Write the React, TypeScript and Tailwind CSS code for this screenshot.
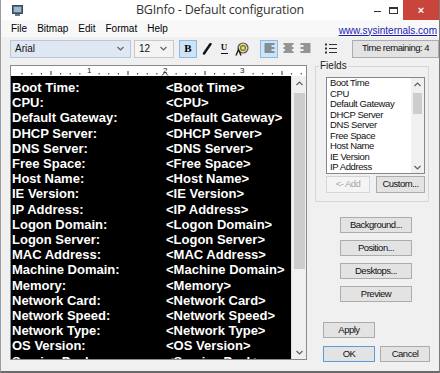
import React from "react";

const rows: [string, string][] = [
  ["Boot Time:", "<Boot Time>"],
  ["CPU:", "<CPU>"],
  ["Default Gateway:", "<Default Gateway>"],
  ["DHCP Server:", "<DHCP Server>"],
  ["DNS Server:", "<DNS Server>"],
  ["Free Space:", "<Free Space>"],
  ["Host Name:", "<Host Name>"],
  ["IE Version:", "<IE Version>"],
  ["IP Address:", "<IP Address>"],
  ["Logon Domain:", "<Logon Domain>"],
  ["Logon Server:", "<Logon Server>"],
  ["MAC Address:", "<MAC Address>"],
  ["Machine Domain:", "<Machine Domain>"],
  ["Memory:", "<Memory>"],
  ["Network Card:", "<Network Card>"],
  ["Network Speed:", "<Network Speed>"],
  ["Network Type:", "<Network Type>"],
  ["OS Version:", "<OS Version>"],
  ["Service Pack:", "<Service Pack>"],
];

const fields = [
  "Boot Time",
  "CPU",
  "Default Gateway",
  "DHCP Server",
  "DNS Server",
  "Free Space",
  "Host Name",
  "IE Version",
  "IP Address",
];

function Chevron({ up = false }: { up?: boolean }) {
  return (
    <svg width="7" height="5" viewBox="0 0 7 5">
      <path
        d={up ? "M0.5 4 L3.5 1 L6.5 4" : "M0.5 1 L3.5 4 L6.5 1"}
        fill="none"
        stroke="#606060"
        strokeWidth="1.2"
      />
    </svg>
  );
}

function Ruler() {
  const ticks: React.ReactNode[] = [];
  for (let i = 1; i < 31; i++) {
    const x = 1 + i * 9.625;
    if (i % 8 === 0) continue;
    const half = i % 4 === 0;
    ticks.push(
      <rect key={i} x={x} y={half ? 5 : 7} width="1" height={half ? 4 : 1.5} fill="#333" />
    );
  }
  return (
    <svg width="294" height="10" viewBox="0 0 294 10" className="block">
      {ticks}
      <text x="76" y="7" fontSize="8" fontFamily="Liberation Sans, Arial, sans-serif" fill="#222">1</text>
      <text x="152" y="7" fontSize="8" fontFamily="Liberation Sans, Arial, sans-serif" fill="#222">2</text>
      <path d="M151 9.5 L154 6 L157 9.5" fill="none" stroke="#333" strokeWidth="1" />
      <text x="229" y="7" fontSize="8" fontFamily="Liberation Sans, Arial, sans-serif" fill="#222">3</text>
    </svg>
  );
}

function AlignIcon({ kind }: { kind: "left" | "center" | "right" }) {
  const lens = [10, 7, 10, 7, 10];
  return (
    <svg width="11" height="11" viewBox="0 0 11 11">
      {lens.map((l, i) => {
        const x = kind === "left" ? 0.5 : kind === "right" ? 10.5 - l : (11 - l) / 2;
        return <rect key={i} x={x} y={i * 2 + 0.5} width={l} height="1" fill="#3a3a3a" />;
      })}
    </svg>
  );
}

function WinBtn({
  children,
  className = "",
}: {
  children: React.ReactNode;
  className?: string;
}) {
  return (
    <div
      className={`flex items-center justify-center bg-[#e3e3e3] border border-[#acacac] text-[9.5px] tracking-[-0.5px] text-[#111] ${className}`}
    >
      {children}
    </div>
  );
}

export default function App() {
  return (
    <div className="w-[440px] h-[373px] overflow-hidden flex bg-[#f0f0f0] font-['Liberation_Sans',Arial,sans-serif]">
      {/* background sliver */}
      <div className="w-[3px] h-full flex flex-col">
        <div className="h-[19px] bg-[#c8463f]" />
        <div className="flex-1 bg-[#e6e6e6]" />
      </div>
      {/* window */}
      <div className="flex-1 h-full flex flex-col border-l border-l-[#9c9c9c] border-r border-r-[#7a7a7a] border-b-[2px] border-b-[#6a6a6a]">
        {/* title bar */}
        <div className="h-[20px] bg-white grid grid-cols-[70px_1fr_70px] items-center">
          <div className="pl-[11px] flex items-center">
            <svg width="11" height="11" viewBox="0 0 11 11">
              <rect x="0.5" y="0.5" width="10" height="8" fill="#5a7089" stroke="#3a4a5c" />
              <rect x="2" y="2" width="7" height="5" fill="#9fb7cf" />
              <rect x="3" y="9" width="5" height="2" fill="#6d7c8c" />
            </svg>
          </div>
          <div className="text-center text-[12.5px] text-[#333] font-['Open_Sans',Arial,sans-serif] tracking-[-0.2px] leading-none">
            BGInfo - Default configuration
          </div>
          <div className="flex items-center h-full">
            <div className="w-[12px] ml-[2px] flex justify-center">
              <div className="w-[7px] h-[1px] bg-[#333] mt-[2px]" />
            </div>
            <div className="w-[20px] flex justify-center">
              <div className="w-[9px] h-[7px] border border-[#333] border-t-2" />
            </div>
            <div className="flex-1 h-full bg-[#c9443b] flex items-center justify-center text-white text-[11px] font-bold">
              ×
            </div>
          </div>
        </div>
        {/* menu bar */}
        <div className="h-[17px] bg-[#f8f8f8] flex items-center pl-[10px] pr-[2px] text-[10px] text-black">
          <div className="flex gap-[10px]">
            <span>File</span>
            <span>Bitmap</span>
            <span>Edit</span>
            <span>Format</span>
            <span>Help</span>
          </div>
          <span className="ml-auto mt-[3px] text-[10px] text-[#1a1ab0] underline">www.sysinternals.com</span>
        </div>
        {/* toolbar */}
        <div className="h-[23px] flex items-center pl-[9px]">
          <div className="w-[121px] h-[18px] bg-[#dfe8f2] border border-[#b9c8d8] flex items-center pl-[4px] pr-[6px] text-[10px] text-[#111]">
            <span>Arial</span>
            <span className="ml-auto">
              <Chevron />
            </span>
          </div>
          <div className="ml-[3px] w-[40px] h-[18px] bg-[#f4f4f4] border border-[#c8c8c8] flex items-center pl-[4px] pr-[6px] text-[10px] text-[#111]">
            <span>12</span>
            <span className="ml-auto">
              <Chevron />
            </span>
          </div>
          <div className="ml-[5px] w-[18px] h-[18px] bg-[#cde4f7] border border-[#8fb9e3] flex items-center justify-center text-[11px] font-bold font-['Liberation_Serif',serif] text-black">
            B
          </div>
          <div className="ml-[3px] w-[14px] h-[18px] flex items-center justify-center">
            <svg width="10" height="12" viewBox="0 0 10 12">
              <path d="M8.5 1 L2 10.5" stroke="#111" strokeWidth="2.4" strokeLinecap="round" />
            </svg>
          </div>
          <div className="ml-[3px] w-[14px] h-[18px] flex flex-col items-center justify-center">
            <span className="text-[9px] font-bold font-['Liberation_Serif',serif] leading-none text-[#111]">U</span>
            <div className="w-[7px] h-[1px] bg-[#111] mt-[1px]" />
          </div>
          <div className="ml-[3px] w-[16px] h-[18px] flex items-center justify-center">
            <svg width="14" height="14" viewBox="0 0 14 14">
              <circle cx="8" cy="6" r="5" fill="#e8d98a" stroke="#555" strokeWidth="1.2" />
              <circle cx="8" cy="6" r="2.4" fill="none" stroke="#6b7a2a" strokeWidth="1.2" />
              <path d="M1 13.5 L3.5 7.5 L6 13.5" fill="none" stroke="#222" strokeWidth="1.4" />
            </svg>
          </div>
          <div className="ml-[10px] w-[18px] h-[18px] bg-[#cde4f7] border border-[#8fb9e3] flex items-center justify-center">
            <AlignIcon kind="left" />
          </div>
          <div className="ml-[3px] w-[14px] h-[18px] flex items-center justify-center">
            <AlignIcon kind="center" />
          </div>
          <div className="ml-[3px] w-[14px] h-[18px] flex items-center justify-center">
            <AlignIcon kind="right" />
          </div>
          <div className="ml-[12px] w-[14px] h-[18px] flex items-center justify-center">
            <svg width="12" height="11" viewBox="0 0 12 11">
              <rect x="0" y="0.5" width="2" height="2" fill="#333" />
              <rect x="0" y="4.5" width="2" height="2" fill="#333" />
              <rect x="0" y="8.5" width="2" height="2" fill="#333" />
              <rect x="4" y="1" width="8" height="1" fill="#333" />
              <rect x="4" y="5" width="8" height="1" fill="#333" />
              <rect x="4" y="9" width="8" height="1" fill="#333" />
            </svg>
          </div>
          <WinBtn className="ml-[14px] w-[87px] h-[18px]">Time remaining: 4</WinBtn>
        </div>
        {/* main area */}
        <div className="flex-1 flex">
          {/* editor */}
          <div className="ml-[9px] mt-[5px] w-[297px] h-[295px] border border-[#8a8a8a] flex flex-col">
            <div className="h-[10px] bg-white">
              <Ruler />
            </div>
            <div className="flex-1 flex min-h-0">
              <div className="w-[280px] bg-black overflow-hidden pt-[4px] pl-[1px]">
                {rows.map(([l, v]) => (
                  <div key={l} className="flex text-[13px] leading-[15.2px] font-bold text-white whitespace-nowrap">
                    <span className="w-[154px] shrink-0">{l}</span>
                    <span>{v}</span>
                  </div>
                ))}
              </div>
              <div className="w-[15px] bg-[#f0f0f0] border-l border-l-[#e0e0e0] flex flex-col items-center">
                <div className="h-[14px] flex items-center">
                  <Chevron up />
                </div>
                <div className="w-[11px] h-[176px] bg-[#cdcdcd] mt-[3px]" />
                <div className="mt-auto h-[14px] flex items-center">
                  <Chevron />
                </div>
              </div>
            </div>
          </div>
          {/* right panel */}
          <div className="ml-[7px] w-[120px] flex flex-col">
            <div className="relative mt-[6px] ml-[1px] w-[114px] h-[136px] border border-[#d6d6d6]">
              <span className="absolute -top-[6px] left-[3px] px-[1px] bg-[#f0f0f0] text-[10px] leading-[10px] text-[#222]">
                Fields
              </span>
              <div className="ml-[10px] mt-[10px] w-[99px] h-[97px] bg-white border border-[#828790] flex overflow-hidden">
                <div className="flex-1 pl-[3px] overflow-hidden">
                  {fields.map((f) => (
                    <div key={f} className="text-[9.5px] leading-[10.5px] tracking-[-0.4px] text-[#111] whitespace-nowrap">
                      {f}
                    </div>
                  ))}
                </div>
                <div className="w-[13px] bg-[#f0f0f0] flex flex-col items-center">
                  <div className="h-[12px] flex items-center">
                    <Chevron up />
                  </div>
                  <div className="w-[9px] h-[21px] bg-[#cdcdcd] mt-[3px]" />
                  <div className="mt-auto h-[12px] flex items-center">
                    <Chevron />
                  </div>
                </div>
              </div>
              <div className="ml-[10px] mt-[2px] flex gap-[6px]">
                <div className="w-[44px] h-[17px] bg-[#f4f4f4] border border-[#d5d5d5] flex items-center justify-center text-[9.5px] tracking-[-0.5px] text-[#a8a8a8]">
                  &lt;- Add
                </div>
                <WinBtn className="w-[49px] h-[17px]">Custom...</WinBtn>
              </div>
            </div>
            <div className="ml-[26px] mt-[15px] flex flex-col gap-[7px]">
              <WinBtn className="w-[72px] h-[16px]">Background...</WinBtn>
              <WinBtn className="w-[72px] h-[16px]">Position...</WinBtn>
              <WinBtn className="w-[72px] h-[16px]">Desktops...</WinBtn>
              <WinBtn className="w-[72px] h-[16px]">Preview</WinBtn>
            </div>
            <WinBtn className="ml-[9px] mt-[20px] w-[52px] h-[16px]">Apply</WinBtn>
            <div className="ml-[9px] mt-[8px] flex gap-[5px]">
              <WinBtn className="w-[52px] h-[16px] !border-[#5a9bd8]">OK</WinBtn>
              <WinBtn className="w-[50px] h-[16px]">Cancel</WinBtn>
            </div>
          </div>
        </div>
      </div>
    </div>
  );
}
